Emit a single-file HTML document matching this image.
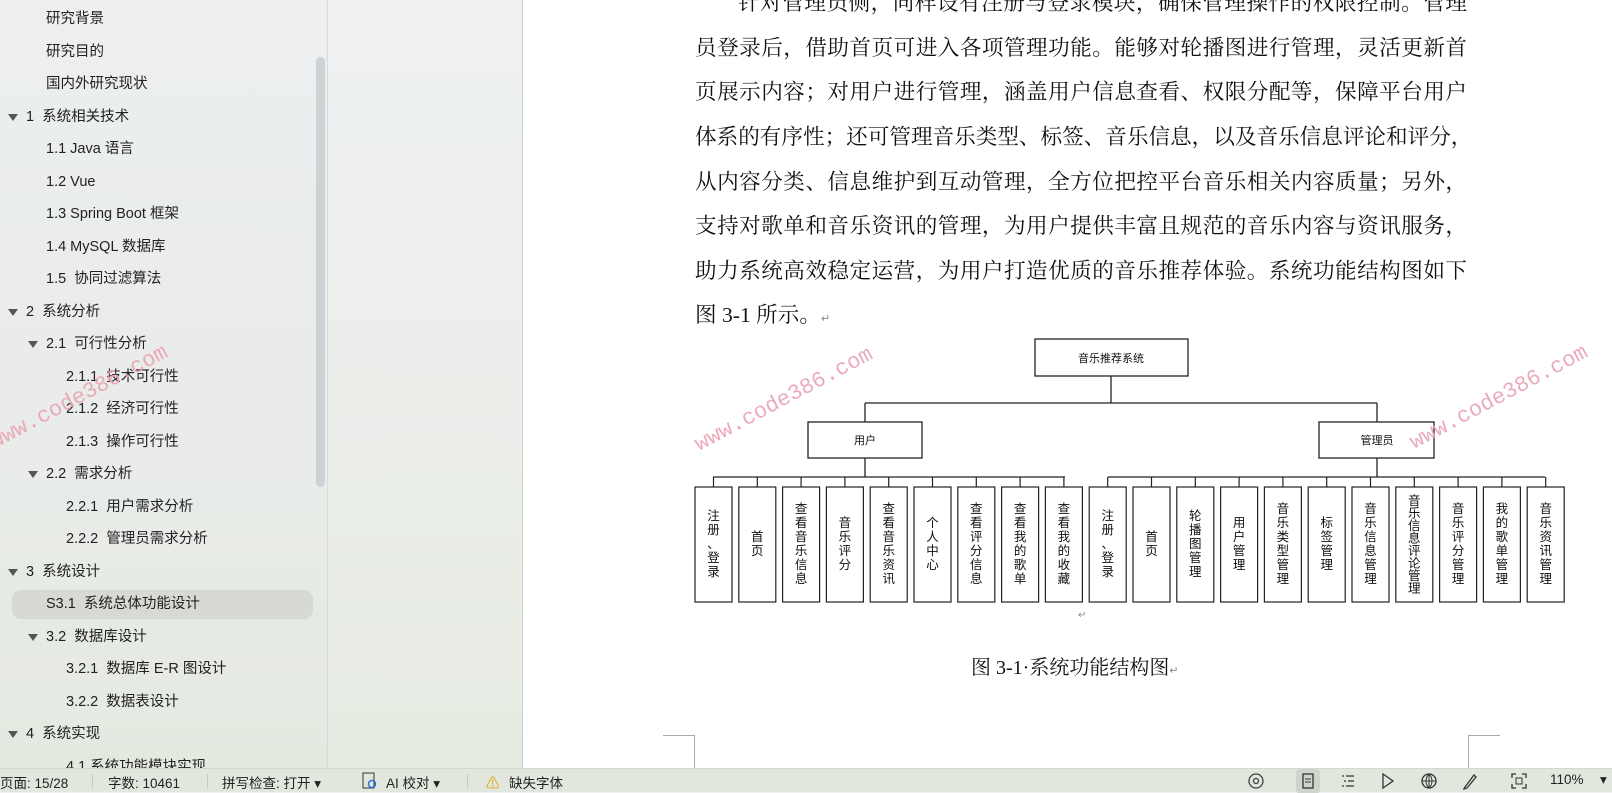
<!DOCTYPE html>
<html><head><meta charset="utf-8"><style>
*{margin:0;padding:0;box-sizing:border-box}
body{width:1612px;height:792px;overflow:hidden;position:relative;font-family:"Liberation Sans","Noto Sans CJK SC",sans-serif;background:#eef0f1}
#nav{position:absolute;left:0;top:0;width:328px;height:768px;background:linear-gradient(180deg,#eceef0 0%,#e9ece9 60%,#e4e9e0 100%);border-right:1px solid #d8dbd9}
#gap{position:absolute;left:328px;top:0;width:195px;height:768px;background:linear-gradient(180deg,#eef0f2 0%,#ebeee9 60%,#e6ebe2 100%);border-right:1px solid #cfd2d2}
.it{position:absolute;font-size:14.5px;color:#222;white-space:nowrap;line-height:20px}
.ar{position:absolute;width:0;height:0;border-left:5px solid transparent;border-right:5px solid transparent;border-top:7px solid #555}
#sb{position:absolute;left:316px;top:57px;width:9px;height:430px;background:#cfd2d4;border-radius:5px}
#hl{position:absolute;left:12px;top:590px;width:301px;height:29px;background:#d6d9d4;border-radius:9px}
#page{position:absolute;left:523px;top:0;width:1089px;height:768px;background:#fff}
.ln{position:absolute;left:695px;width:772px;font-family:"Liberation Serif","Noto Serif CJK SC",serif;font-size:21.6px;color:#111;text-align:justify;text-align-last:justify;line-height:28px;white-space:nowrap}
#status{position:absolute;left:0;top:768px;width:1612px;height:24px;background:#e2e7de;border-top:1px solid #d3d8d0;font-size:13.5px;color:#222}
#status span{position:absolute;top:3px;white-space:nowrap}
.sep{position:absolute;top:5px;width:1px;height:15px;background:#c6cbc3}
.wm{position:absolute;font-family:"Liberation Mono",monospace;font-size:22px;color:#e9a2b4;transform:rotate(-28deg);white-space:nowrap;opacity:.9}
</style></head><body>
<div id="nav">
<div id="hl"></div>
<div class="it" style="left:46px;top:9px">研究背景</div>
<div class="it" style="left:46px;top:42px">研究目的</div>
<div class="it" style="left:46px;top:74px">国内外研究现状</div>
<div class="ar" style="left:8px;top:114px"></div><div class="it" style="left:26px;top:107px">1&nbsp; 系统相关技术</div>
<div class="it" style="left:46px;top:139px">1.1 Java 语言</div>
<div class="it" style="left:46px;top:172px">1.2 Vue</div>
<div class="it" style="left:46px;top:204px">1.3 Spring Boot 框架</div>
<div class="it" style="left:46px;top:237px">1.4 MySQL 数据库</div>
<div class="it" style="left:46px;top:269px">1.5&nbsp; 协同过滤算法</div>
<div class="ar" style="left:8px;top:309px"></div><div class="it" style="left:26px;top:302px">2&nbsp; 系统分析</div>
<div class="ar" style="left:28px;top:341px"></div><div class="it" style="left:46px;top:334px">2.1&nbsp; 可行性分析</div>
<div class="it" style="left:66px;top:367px">2.1.1&nbsp; 技术可行性</div>
<div class="it" style="left:66px;top:399px">2.1.2&nbsp; 经济可行性</div>
<div class="it" style="left:66px;top:432px">2.1.3&nbsp; 操作可行性</div>
<div class="ar" style="left:28px;top:471px"></div><div class="it" style="left:46px;top:464px">2.2&nbsp; 需求分析</div>
<div class="it" style="left:66px;top:497px">2.2.1&nbsp; 用户需求分析</div>
<div class="it" style="left:66px;top:529px">2.2.2&nbsp; 管理员需求分析</div>
<div class="ar" style="left:8px;top:569px"></div><div class="it" style="left:26px;top:562px">3&nbsp; 系统设计</div>
<div class="it" style="left:46px;top:594px">S3.1&nbsp; 系统总体功能设计</div>
<div class="ar" style="left:28px;top:634px"></div><div class="it" style="left:46px;top:627px">3.2&nbsp; 数据库设计</div>
<div class="it" style="left:66px;top:659px">3.2.1&nbsp; 数据库 E-R 图设计</div>
<div class="it" style="left:66px;top:692px">3.2.2&nbsp; 数据表设计</div>
<div class="ar" style="left:8px;top:731px"></div><div class="it" style="left:26px;top:724px">4&nbsp; 系统实现</div>
<div class="it" style="left:66px;top:757px">4.1 系统功能模块实现</div>
<div id="sb"></div>
</div>
<div id="gap"></div>
<div id="page"></div>
<div class="ln" style="top:-11px;left:738px;width:729px">针对管理员侧，同样设有注册与登录模块，确保管理操作的权限控制。管理</div>
<div class="ln" style="top:34px">员登录后，借助首页可进入各项管理功能。能够对轮播图进行管理，灵活更新首</div>
<div class="ln" style="top:78px">页展示内容；对用户进行管理，涵盖用户信息查看、权限分配等，保障平台用户</div>
<div class="ln" style="top:123px">体系的有序性；还可管理音乐类型、标签、音乐信息，以及音乐信息评论和评分，</div>
<div class="ln" style="top:168px">从内容分类、信息维护到互动管理，全方位把控平台音乐相关内容质量；另外，</div>
<div class="ln" style="top:212px">支持对歌单和音乐资讯的管理，为用户提供丰富且规范的音乐内容与资讯服务，</div>
<div class="ln" style="top:257px">助力系统高效稳定运营，为用户打造优质的音乐推荐体验。系统功能结构图如下</div>
<div class="ln" style="top:301px;text-align:left;text-align-last:left">图 3-1 所示。<span style="font-size:11px;color:#888">↵</span></div>

<svg style="position:absolute;left:0;top:0" width="1612" height="768" xmlns="http://www.w3.org/2000/svg">
<g stroke="#222" stroke-width="1.3" fill="#fff">
<rect x="1035" y="339" width="153" height="37"/>
<rect x="808" y="422" width="114" height="36"/>
<rect x="1319" y="422" width="115" height="36"/>
<path d="M1111 376V403M865 403H1377M865 403V422M1377 403V422M865 458V477M1377 458V477M713 477H1065M1108 477H1545" fill="none"/>
</g>
<g font-family="Liberation Sans,Noto Sans CJK SC,sans-serif" font-size="11" fill="#111" text-anchor="middle">
<text x="1111" y="362">音乐推荐系统</text>
<text x="865" y="444">用户</text>
<text x="1377" y="444">管理员</text>
</g>
<g id="leaves" stroke="#222" stroke-width="1.2" fill="#fff"></g>
<g id="lt" font-family="Liberation Sans,Noto Sans CJK SC,sans-serif" font-size="12.5" fill="#111"></g>
</svg>
<div style="position:absolute;left:1078px;top:610px;font-size:10px;color:#888">↵</div>
<div style="position:absolute;left:971px;top:651px;font-family:'Liberation Serif','Noto Serif CJK SC',serif;font-size:20px;color:#111;white-space:nowrap">图 3-1·系统功能结构图<span style="font-size:11px;color:#888">↵</span></div>
<div style="position:absolute;left:663px;top:735px;width:32px;height:33px;border-top:1px solid #aaa;border-right:1px solid #aaa"></div>
<div style="position:absolute;left:1468px;top:735px;width:32px;height:33px;border-top:1px solid #aaa;border-left:1px solid #aaa"></div>

<div class="wm" style="left:-20px;top:385px">www.code386.com</div>
<div class="wm" style="left:685px;top:387px">www.code386.com</div>
<div class="wm" style="left:1400px;top:385px">www.code386.com</div>

<div id="status">
<span style="left:0">页面: 15/28</span><i class="sep" style="left:92px"></i>
<span style="left:108px">字数: 10461</span><i class="sep" style="left:207px"></i>
<span style="left:222px">拼写检查: 打开 ▾</span>
<svg style="position:absolute;left:362px;top:3px" width="16" height="18"><rect x="1" y="1" width="11" height="15" fill="none" stroke="#333"/><circle cx="10" cy="12" r="3.5" fill="none" stroke="#2a6fd6" stroke-width="1.5"/></svg>
<span style="left:386px">AI 校对 ▾</span><i class="sep" style="left:467px"></i>
<span style="left:486px;color:#e0a000">⚠</span><span style="left:509px">缺失字体</span>
<svg style="position:absolute;left:1247px;top:3px" width="18" height="18"><circle cx="9" cy="9" r="7" fill="none" stroke="#444" stroke-width="1.3"/><circle cx="9" cy="9" r="2.5" fill="none" stroke="#444" stroke-width="1.3"/></svg>
<div style="position:absolute;left:1296px;top:0;width:24px;height:24px;background:#cfd4cc;border-radius:3px"></div>
<svg style="position:absolute;left:1300px;top:3px" width="16" height="18"><rect x="3" y="2" width="10" height="14" fill="none" stroke="#333" stroke-width="1.3"/><path d="M5 7h6M5 10h6" stroke="#333"/></svg>
<svg style="position:absolute;left:1340px;top:3px" width="16" height="18"><path d="M2 4h2M6 4h8M4 9h2M8 9h6M2 14h2M6 14h8" stroke="#333" stroke-width="1.3"/></svg>
<svg style="position:absolute;left:1380px;top:3px" width="16" height="18"><path d="M3 2L13 9L3 16Z" fill="none" stroke="#333" stroke-width="1.3"/></svg>
<svg style="position:absolute;left:1420px;top:3px" width="18" height="18"><circle cx="9" cy="9" r="7" fill="none" stroke="#333" stroke-width="1.3"/><path d="M2 9h14M9 2v14M9 2c-4 4-4 10 0 14M9 2c4 4 4 10 0 14" fill="none" stroke="#333"/></svg>
<svg style="position:absolute;left:1461px;top:3px" width="18" height="18"><path d="M4 15L13 3L15 5L6 16L3 17Z" fill="none" stroke="#333" stroke-width="1.3"/></svg>
<svg style="position:absolute;left:1510px;top:3px" width="18" height="18"><path d="M2 6V2h4M12 2h4v4M16 12v4h-4M6 16H2v-4" fill="none" stroke="#333" stroke-width="1.3"/><rect x="6" y="6" width="6" height="6" fill="none" stroke="#333"/></svg>
<span style="left:1550px">110%</span><span style="left:1600px">▾</span>
</div>
<script>
var L=["注册、登录","首页","查看音乐信息","音乐评分","查看音乐资讯","个人中心","查看评分信息","查看我的歌单","查看我的收藏","注册、登录","首页","轮播图管理","用户管理","音乐类型管理","标签管理","音乐信息管理","音乐信息评论管理","音乐评分管理","我的歌单管理","音乐资讯管理"];
var g=document.getElementById('leaves'),t=document.getElementById('lt'),ns="http://www.w3.org/2000/svg";
L.forEach(function(s,i){var x=695+i*43.8,c=x+18.5;
var r=document.createElementNS(ns,'rect');r.setAttribute('x',x);r.setAttribute('y',487);r.setAttribute('width',37);r.setAttribute('height',115);g.appendChild(r);
var p=document.createElementNS(ns,'path');p.setAttribute('d','M'+c+' 477V487');g.appendChild(p);
var n=s.length,st=n>7?12.5:14,h=n*st,y0=544-h/2+11;
for(var k=0;k<n;k++){var e=document.createElementNS(ns,'text');e.setAttribute('x',c);e.setAttribute('y',y0+k*st);e.setAttribute('text-anchor','middle');e.textContent=s[k];t.appendChild(e);}
});
</script>
</body></html>
